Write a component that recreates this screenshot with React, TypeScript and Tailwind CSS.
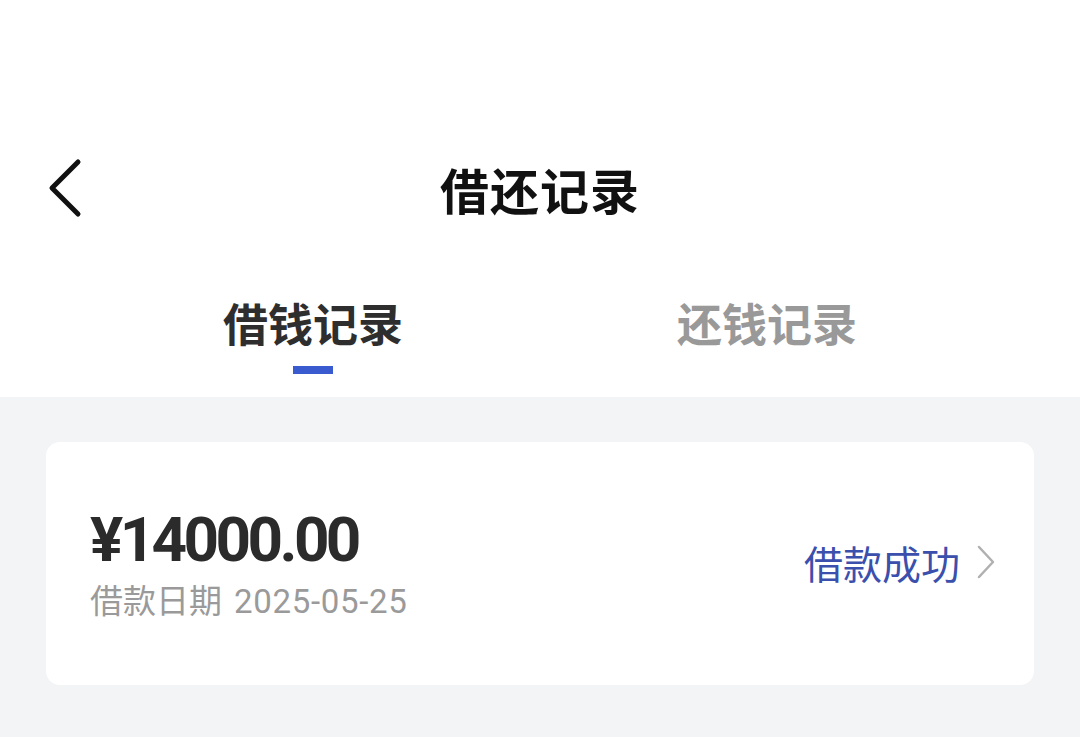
import React from "react";

export default function App() {
  const cjk = { fontFamily: '"Noto Sans CJK SC", "Noto Sans", sans-serif' };
  return (
    <div className="w-[1080px] h-[737px] bg-[#f2f4f5] overflow-hidden" style={cjk}>
      <div className="bg-white">
        <div className="h-[134px]" />
        <div className="relative h-[108px] flex items-center justify-center">
          <div className="absolute left-[44px] top-[24px]">
            <svg width="40" height="60" viewBox="0 0 40 60" fill="none">
              <path d="M34 4 L8 30 L34 56" stroke="#111" strokeWidth="5" strokeLinecap="round" strokeLinejoin="round" />
            </svg>
          </div>
          <div className="text-[49px] font-bold text-[#111] leading-none tracking-[1px]">借还记录</div>
        </div>
        <div className="px-[86px] flex h-[155px]">
          <div className="flex-1 flex flex-col items-center pt-[58px]">
            <div className="text-[45px] font-bold text-[#2e2e2e] leading-none">借钱记录</div>
            <div className="mt-[21px] w-[40px] h-[8px] bg-[#3a5bd0]" />
          </div>
          <div className="flex-1 flex flex-col items-center pt-[58px]">
            <div className="text-[45px] font-bold text-[#999999] leading-none">还钱记录</div>
          </div>
        </div>
      </div>
      <div className="px-[46px] pt-[45px]">
        <div className="bg-white rounded-[14px] h-[243px] flex items-center pl-[44px] pr-[38px]">
          <div className="flex-1 flex flex-col">
            <div
              className="text-[62px] font-bold text-[#2b2b2b] leading-none tracking-[-3.6px]"
              style={{ fontFamily: 'Roboto, "Liberation Sans", sans-serif' }}
            >
              ¥14000.00
            </div>
            <div className="mt-[12px] text-[33px] text-[#9a9a9a] leading-none flex items-baseline">
              <span>借款日期</span>
              <span className="ml-[12px] tracking-[0.7px]" style={{ fontFamily: 'Roboto, "Noto Sans", sans-serif' }}>2025-05-25</span>
            </div>
          </div>
          <div className="flex items-center -mt-[3px]">
            <span className="text-[39px] text-[#3b4fad] leading-none">借款成功</span>
            <svg className="ml-[16px]" width="20" height="36" viewBox="0 0 20 36" fill="none">
              <path d="M3 3 L17 18 L3 33" stroke="#b0b0b0" strokeWidth="2.5" strokeLinecap="round" strokeLinejoin="round" />
            </svg>
          </div>
        </div>
      </div>
    </div>
  );
}
